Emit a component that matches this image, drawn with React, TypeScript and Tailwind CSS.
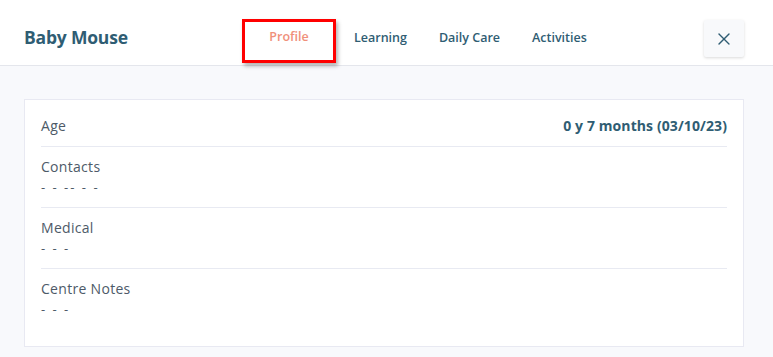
import { X } from 'lucide-react';

type Row = { label: string; value?: string; right?: string };

const rows: Row[] = [
  { label: 'Age', right: '0 y 7 months (03/10/23)' },
  { label: 'Contacts', value: '- - -- - -' },
  { label: 'Medical', value: '- - -' },
  { label: 'Centre Notes', value: '- - -' },
];

const tabs = ['Profile', 'Learning', 'Daily Care', 'Activities'];

export default function App() {
  return (
    <div
      className="h-[357px] w-[773px] overflow-hidden bg-[#f8f9fc] text-[#2f5d73]"
      style={{ fontFamily: '"Open Sans", "Liberation Sans", sans-serif' }}
    >
      <header className="flex h-[66px] items-start border-b border-[#e4e6ec] bg-white pl-6 pr-[29px] pt-[19px]">
        <h1 className="mt-[5px] w-[218px] text-[17.5px] font-bold leading-[27px] tracking-[-0.2px]">Baby Mouse</h1>
        <nav className="flex flex-1 items-start">
          <div className="flex h-[44px] w-[94px] items-start justify-center border-[3px] border-[#ff0000] pt-[6px] text-[12.5px] font-semibold leading-[18px] text-[#f0907a] shadow-[2px_3px_4px_rgba(0,0,0,0.3)]">
            {tabs[0]}
          </div>
          <div className="ml-[18px] mt-[10px] flex gap-[32px] text-[12.5px] font-semibold leading-[18px]">
            {tabs.slice(1).map((t) => (
              <span key={t}>{t}</span>
            ))}
          </div>
        </nav>
        <button className="mt-[1px] flex h-[37px] w-[40px] items-center justify-center rounded-[2px] bg-[#f8f9fb] shadow-[0_1px_3px_rgba(0,0,0,0.15)]">
          <X className="h-5 w-5" strokeWidth={1.6} />
        </button>
      </header>

      <main className="px-6 pt-[33px]">
        <section className="w-[720px] border border-[#e8e9f2] bg-white px-4 pb-[27px] pt-[6px]">
          {rows.map((r, i) => (
            <div
              key={r.label}
              className={`flex items-start justify-between pt-[10px] ${
                i < rows.length - 1 ? 'border-b border-[#e8eaf2] pb-[10px]' : ''
              }`}
            >
              <div className="flex flex-col">
                <span className="text-[14px] leading-[20px] tracking-[0.3px] text-[#4d5a68]">{r.label}</span>
                {r.value && (
                  <span className="text-[13px] leading-[20px] tracking-[2px] text-[#4d5a68]">{r.value}</span>
                )}
              </div>
              {r.right && (
                <span className="text-[14px] font-bold leading-[20px] tracking-[0.1px]">{r.right}</span>
              )}
            </div>
          ))}
        </section>
      </main>
    </div>
  );
}
